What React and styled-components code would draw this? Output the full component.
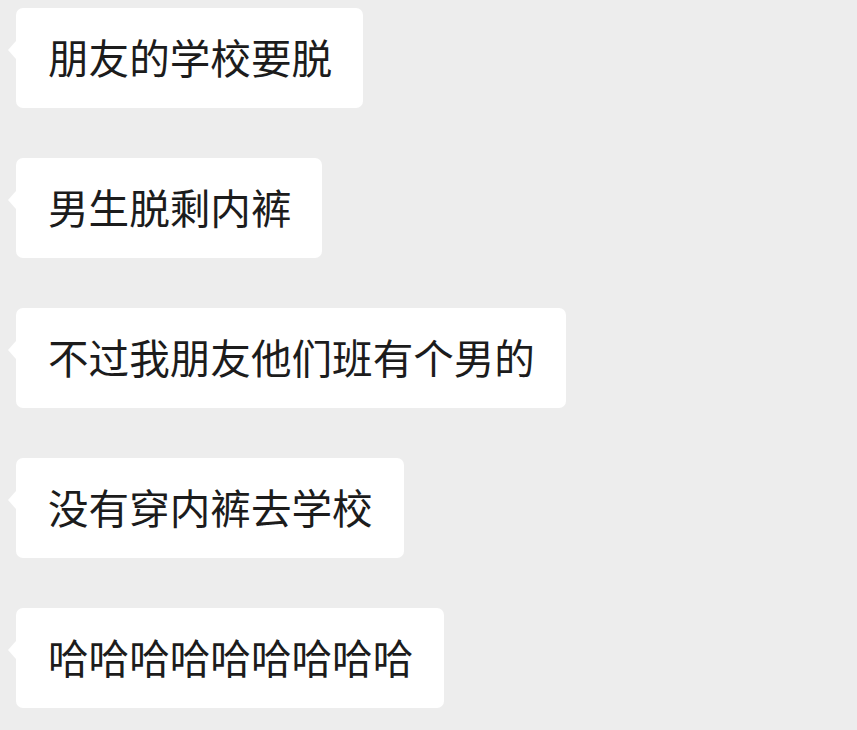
import React from "react";
import styled, { createGlobalStyle } from "styled-components";

const Global = createGlobalStyle`
  html, body {
    margin: 0;
    padding: 0;
    background: #ededed;
  }
  body {
    font-family: "Noto Sans CJK SC", "Noto Sans", sans-serif;
  }
`;

const Chat = styled.div`
  display: flex;
  flex-direction: column;
  align-items: flex-start;
  gap: 50px;
  padding: 8px 0 0 16px;
  min-height: 730px;
  box-sizing: border-box;
  background: #ededed;
`;

const Bubble = styled.div`
  position: relative;
  height: 100px;
  display: flex;
  align-items: center;
  padding: 0 31px 0 32px;
  background: #ffffff;
  border-radius: 7px;
  color: #1c1c1c;
  font-size: 40.6px;
  line-height: 1;
  white-space: nowrap;
  padding-bottom: 2px;
  box-sizing: border-box;

  &::before {
    content: "";
    position: absolute;
    left: -8px;
    top: 33px;
    width: 0;
    height: 0;
    border-top: 9px solid transparent;
    border-bottom: 9px solid transparent;
    border-right: 8px solid #ffffff;
  }
`;

const messages = [
  "朋友的学校要脱",
  "男生脱剩内裤",
  "不过我朋友他们班有个男的",
  "没有穿内裤去学校",
  "哈哈哈哈哈哈哈哈哈",
];

export default function App() {
  return (
    <>
      <Global />
      <Chat>
        {messages.map((m, i) => (
          <Bubble key={i}>{m}</Bubble>
        ))}
      </Chat>
    </>
  );
}
